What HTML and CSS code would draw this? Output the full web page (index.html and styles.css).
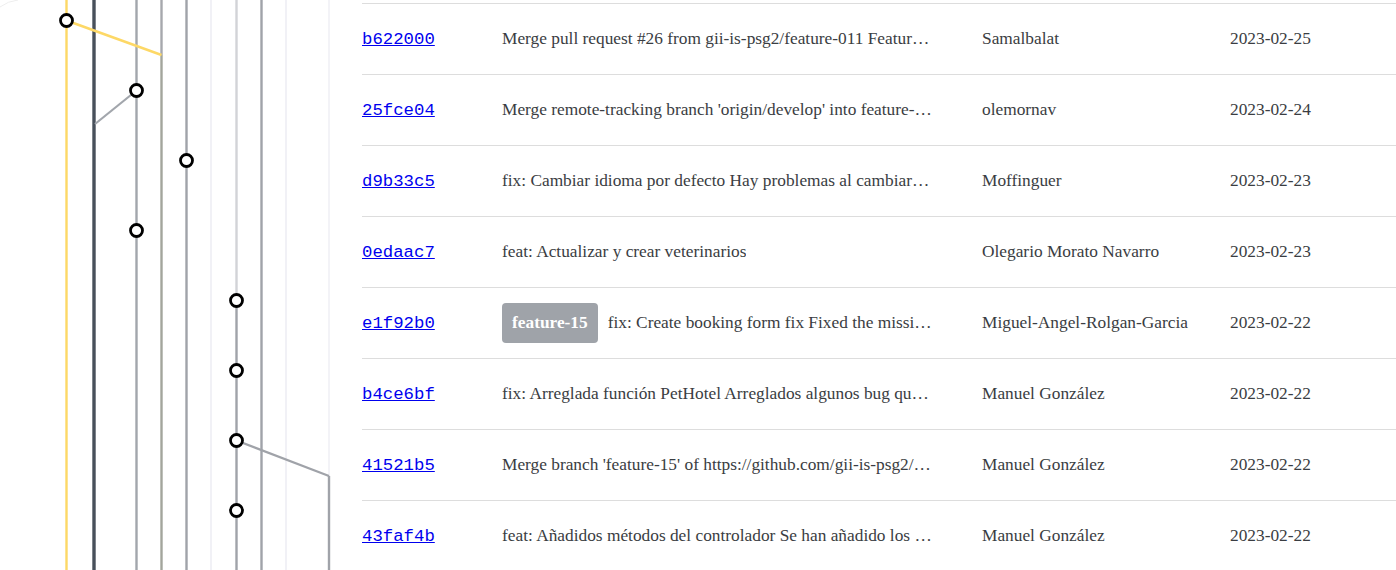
FILE: index.html
```html
<!DOCTYPE html>
<html lang="es">
<head>
<meta charset="utf-8">
<title>Commits</title>
<link rel="stylesheet" href="styles.css">
</head>
<body>
<div class="page">
  <svg class="graph" width="362" height="570" viewBox="0 0 362 570" xmlns="http://www.w3.org/2000/svg">
    <path d="M0 7 Q8 1 18 0" fill="none" stroke="#eeeeee" stroke-width="1"/>
    <g fill="none" stroke-linecap="butt">
      <line x1="211" y1="0" x2="211" y2="570" stroke="#f1f1f6" stroke-width="2"/>
      <line x1="286" y1="0" x2="286" y2="570" stroke="#f1f1f6" stroke-width="2"/>
      <line x1="329" y1="0" x2="329" y2="476" stroke="#f3f3f7" stroke-width="2"/>
      <line x1="329" y1="476" x2="329" y2="570" stroke="#a0a3a9" stroke-width="2.4"/>
      <line x1="236.5" y1="0" x2="236.5" y2="300" stroke="#d2d3d7" stroke-width="2.4"/>
      <line x1="236.5" y1="300" x2="236.5" y2="570" stroke="#a0a3a9" stroke-width="2.4"/>
      <line x1="261.5" y1="0" x2="261.5" y2="570" stroke="#a0a3a9" stroke-width="2.4"/>
      <line x1="186.5" y1="0" x2="186.5" y2="570" stroke="#a0a3a9" stroke-width="2.4"/>
      <line x1="161.5" y1="0" x2="161.5" y2="55" stroke="#a6a8ad" stroke-width="2.4"/>
      <line x1="161.5" y1="55" x2="161.5" y2="570" stroke="#a3a59c" stroke-width="2.4"/>
      <line x1="136.5" y1="0" x2="136.5" y2="570" stroke="#a2a6ac" stroke-width="2.4"/>
      <line x1="66.5" y1="0" x2="66.5" y2="570" stroke="#fdd866" stroke-width="2.4"/>
      <line x1="94" y1="0" x2="94" y2="570" stroke="#48505b" stroke-width="3.4"/>
      <line x1="66.5" y1="20.5" x2="161.5" y2="55" stroke="#fdd866" stroke-width="2.4"/>
      <line x1="136.5" y1="90.5" x2="95" y2="124" stroke="#a2a6ac" stroke-width="2.2"/>
      <line x1="236.5" y1="440.5" x2="329" y2="476" stroke="#a0a3a9" stroke-width="2.2"/>
    </g>
    <g fill="#ffffff" stroke="#000000" stroke-width="2.8">
      <circle cx="66.5" cy="20.5" r="6"/>
      <circle cx="136.5" cy="90.5" r="6"/>
      <circle cx="186.5" cy="160.5" r="6"/>
      <circle cx="136.5" cy="230.5" r="6"/>
      <circle cx="236.5" cy="300.5" r="6"/>
      <circle cx="236.5" cy="370.5" r="6"/>
      <circle cx="236.5" cy="440.5" r="6"/>
      <circle cx="236.5" cy="510.5" r="6"/>
    </g>
  </svg>
  <div class="commits">
    <div class="row">
      <a class="hash" href="#">b622000</a>
      <div class="msg"><span class="text">Merge pull request #26 from gii-is-psg2/feature-011 Feature 011 booking</span></div>
      <div class="author">Samalbalat</div>
      <div class="date">2023-02-25</div>
    </div>
    <div class="row">
      <a class="hash" href="#">25fce04</a>
      <div class="msg"><span class="text">Merge remote-tracking branch 'origin/develop' into feature-011</span></div>
      <div class="author">olemornav</div>
      <div class="date">2023-02-24</div>
    </div>
    <div class="row">
      <a class="hash" href="#">d9b33c5</a>
      <div class="msg"><span class="text">fix: Cambiar idioma por defecto Hay problemas al cambiar el idioma</span></div>
      <div class="author">Moffinguer</div>
      <div class="date">2023-02-23</div>
    </div>
    <div class="row">
      <a class="hash" href="#">0edaac7</a>
      <div class="msg"><span class="text">feat: Actualizar y crear veterinarios</span></div>
      <div class="author">Olegario Morato Navarro</div>
      <div class="date">2023-02-23</div>
    </div>
    <div class="row">
      <a class="hash" href="#">e1f92b0</a>
      <div class="msg"><span class="badge">feature-15</span><span class="text">fix: Create booking form fix Fixed the missing fields</span></div>
      <div class="author">Miguel-Angel-Rolgan-Garcia</div>
      <div class="date">2023-02-22</div>
    </div>
    <div class="row">
      <a class="hash" href="#">b4ce6bf</a>
      <div class="msg"><span class="text">fix: Arreglada función PetHotel Arreglados algunos bug que había</span></div>
      <div class="author">Manuel González</div>
      <div class="date">2023-02-22</div>
    </div>
    <div class="row">
      <a class="hash" href="#">41521b5</a>
      <div class="msg"><span class="text">Merge branch 'feature-15' of https://github.com/gii-is-psg2/psg2-2223-g3-32</span></div>
      <div class="author">Manuel González</div>
      <div class="date">2023-02-22</div>
    </div>
    <div class="row">
      <a class="hash" href="#">43faf4b</a>
      <div class="msg"><span class="text">feat: Añadidos métodos del controlador Se han añadido los métodos</span></div>
      <div class="author">Manuel González</div>
      <div class="date">2023-02-22</div>
    </div>
  </div>
</div>
</body>
</html>
```

FILE: styles.css
```css
html, body {
  margin: 0;
  padding: 0;
  background: #ffffff;
}

body {
  font-family: "Liberation Serif", "Times New Roman", serif;
  font-size: 17.33px;
  color: #3a3d42;
  overflow: hidden;
}

.page {
  display: flex;
  align-items: flex-start;
  height: 570px;
  overflow: hidden;
}

.graph {
  flex: none;
  display: block;
}

.commits {
  flex: 1;
  min-width: 0;
  padding-top: 3px;
}

.row {
  display: grid;
  grid-template-columns: 140px 480px 248px 1fr;
  align-items: center;
  height: 70px;
  border-top: 1px solid #dddddd;
}

.hash {
  font-family: "Liberation Mono", "Courier New", monospace;
  font-size: 17.33px;
  color: #0000ee;
  text-decoration: underline;
}

.msg {
  display: flex;
  align-items: center;
  gap: 10px;
  min-width: 0;
  padding-right: 49px;
}

.text {
  min-width: 0;
  overflow: hidden;
  white-space: nowrap;
  text-overflow: ellipsis;
}

.badge {
  flex: none;
  background: #9fa3a9;
  color: #ffffff;
  font-weight: bold;
  border-radius: 4px;
  height: 40px;
  line-height: 40px;
  padding: 0 10px;
}

.author,
.date {
  white-space: nowrap;
}
```
